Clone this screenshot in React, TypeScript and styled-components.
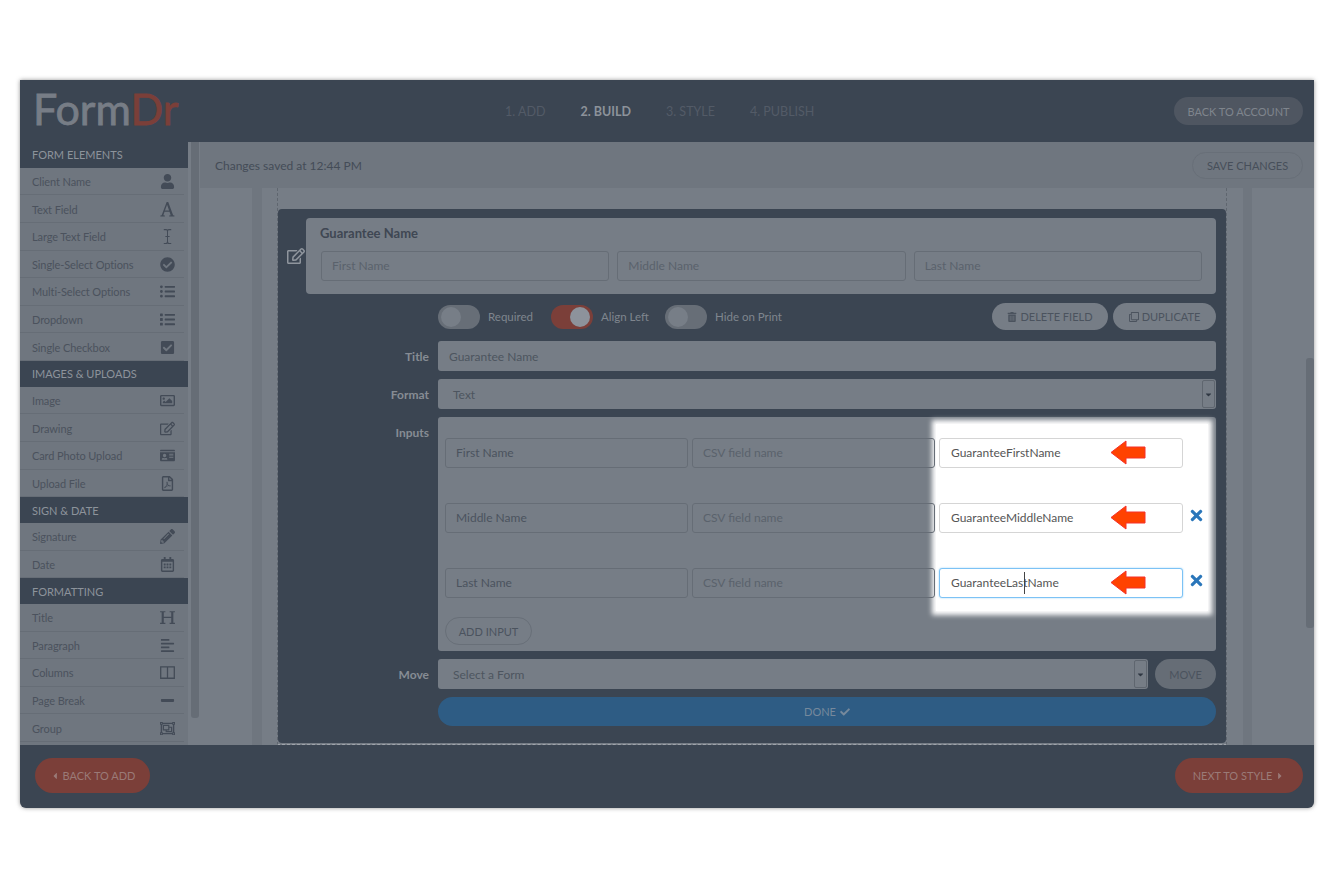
import React from "react";
import styled, { createGlobalStyle } from "styled-components";
import {
  FaUser, FaCheckCircle, FaListUl, FaList, FaCheckSquare, FaRegImage, FaRegEdit, FaIdCard,
  FaRegFilePdf, FaPencilAlt, FaRegCalendarAlt, FaAlignLeft, FaMinus, FaRegObjectGroup,
  FaTrashAlt, FaRegClone, FaCheck, FaTimes, FaCaretDown, FaCaretLeft, FaCaretRight,
} from "react-icons/fa";

const DARK = "#3b4552";
const PANEL = "#767d86";
const PANEL_ALT = "#6f767f";
const FONT = `"Lato", "Noto Sans", sans-serif`;

const Global = createGlobalStyle`
  html, body { margin: 0; padding: 0; background: #fff; }
  body { font-family: ${FONT}; font-size: 12px; }
  * { box-sizing: border-box; }
`;

const Page = styled.div`
  width: 1323px;
  height: 887px;
  padding: 80px 9px 0 20px;
  overflow: hidden;
`;
const Window = styled.div`
  width: 1294px;
  height: 728px;
  display: flex;
  flex-direction: column;
  border-radius: 0 0 6px 6px;
  background: ${DARK};
  box-shadow: 0 0 4px rgba(60, 60, 60, 0.55);
  overflow: hidden;
`;
const Header = styled.header`
  height: 62px;
  flex: none;
  display: flex;
  align-items: center;
  padding: 0 11px 0 13px;
`;
const Logo = styled.div`
  width: 148px;
  padding-bottom: 5px;
  font-family: "Lato", sans-serif;
  font-size: 43px;
  line-height: 56px;
  color: #777d86;
  -webkit-text-stroke: 0.8px currentColor;
  white-space: nowrap;
  span { color: #7b3f39; }
`;
const Steps = styled.nav`
  display: flex;
  gap: 35px;
  margin-left: 324px;
`;
const Step = styled.span<{ $active?: boolean }>`
  font-size: 12.5px;
  font-weight: ${(p) => (p.$active ? 700 : 400)};
  color: ${(p) => (p.$active ? "#8c929a" : "#535b67")};
  white-space: nowrap;
`;
const Pill = styled.div<{ $bg: string; $fg: string; $w: number; $h: number; $line?: string }>`
  width: ${(p) => p.$w}px;
  height: ${(p) => p.$h}px;
  flex: none;
  display: flex;
  align-items: center;
  justify-content: center;
  gap: 3px;
  border-radius: ${(p) => p.$h / 2}px;
  background: ${(p) => p.$bg};
  color: ${(p) => p.$fg};
  border: 1px solid ${(p) => p.$line ?? "transparent"};
  font-size: 11px;
  white-space: nowrap;
  svg { font-size: 10px; }
`;
const HeaderPill = styled(Pill)`
  margin-left: auto;
`;
const Body = styled.div`
  flex: 1;
  min-height: 0;
  display: flex;
`;
const Sidebar = styled.aside`
  width: 168px;
  flex: none;
  background: ${PANEL_ALT};
  overflow: hidden;
`;
const SectionHead = styled.div`
  height: 25.8px;
  display: flex;
  align-items: center;
  padding: 0 0 0 12px;
  background: ${DARK};
  color: #8d939b;
  font-size: 11px;
  white-space: nowrap;
`;
const Item = styled.div`
  height: 27.6px;
  margin-right: 4px;
  display: flex;
  align-items: center;
  justify-content: space-between;
  padding: 1px 8px 0 12px;
  color: #4b525d;
  font-size: 11px;
  letter-spacing: -0.1px;
  border-bottom: 1px solid #666d76;
  white-space: nowrap;
`;
const ItemIcon = styled.span`
  width: 18px;
  height: 18px;
  display: flex;
  align-items: center;
  justify-content: center;
  color: #434b57;
  font-size: 15px;
`;
const SideTrack = styled.div`
  width: 12px;
  flex: none;
  padding: 0 1px 27px 3px;
  background: ${PANEL};
`;
const SideThumb = styled.div`
  height: 576px;
  border-radius: 0 0 3px 3px;
  background: #666d76;
`;
const Main = styled.main`
  flex: 1;
  min-width: 0;
  display: flex;
  flex-direction: column;
  background: ${PANEL};
`;
const SaveBar = styled.div`
  height: 46px;
  flex: none;
  display: flex;
  align-items: center;
  justify-content: space-between;
  padding: 0 11px 0 15px;
  background: ${PANEL_ALT};
  color: #444c57;
  font-size: 12px;
`;
const Canvas = styled.div`
  flex: 1;
  min-height: 0;
  display: flex;
`;
const Stage = styled.div`
  flex: 1;
  padding: 0 51px 0 52px;
  overflow: hidden;
`;
const Sheet = styled.div`
  height: 100%;
  padding: 0 9px 0 10px;
  background: ${PANEL_ALT};
`;
const SheetInner = styled.div`
  height: 100%;
  padding: 0 16px 0 15px;
  background: ${PANEL};
`;
const DashedBox = styled.div`
  height: 100%;
  padding-top: 21px;
  border-left: 1px dashed #5f666f;
  border-right: 1px dashed #5f666f;
  border-bottom: 1px dashed #9ea3aa;
`;
const Card = styled.section`
  height: 534px;
  padding: 9px 10px 0 0;
  background: ${DARK};
  border-radius: 4px;
  display: flex;
  flex-direction: column;
`;
const PreviewRow = styled.div`
  display: flex;
  align-items: center;
  height: 76px;
  flex: none;
`;
const EditIcon = styled.span`
  width: 28px;
  flex: none;
  display: flex;
  justify-content: flex-end;
  padding-right: 1px;
  color: #8f959d;
  font-size: 18px;
`;
const PreviewBox = styled.div`
  flex: 1;
  height: 76px;
  padding: 8px 14px 0 15px;
  border-radius: 4px;
  background: ${PANEL};
`;
const PreviewTitle = styled.div`
  margin: 0 0 10px -1px;
  color: #3f4753;
  font-weight: 700;
  font-size: 13px;
  line-height: 15px;
`;
const PreviewFields = styled.div`
  display: grid;
  grid-template-columns: 1fr 1fr 1fr;
  gap: 8px;
`;
const Field = styled.div<{ $dim?: boolean }>`
  height: 30px;
  display: flex;
  align-items: center;
  padding: 0 0 2px 10px;
  border: 1px solid #666d76;
  border-radius: 3px;
  color: ${(p) => (p.$dim ? "#5a626c" : "#4b535e")};
  font-size: 12px;
  white-space: nowrap;
`;
const Controls = styled.div`
  margin: 9px 0 0 160px;
  height: 27px;
  display: flex;
  align-items: center;
`;
const Switch = styled.span<{ $on?: boolean }>`
  width: 42px;
  height: 24px;
  flex: none;
  display: flex;
  justify-content: ${(p) => (p.$on ? "flex-end" : "flex-start")};
  padding: 2px 3px;
  border-radius: 12px;
  background: ${(p) => (p.$on ? "#7b3f39" : "#676e77")};
`;
const Knob = styled.span<{ $on?: boolean }>`
  width: 20px;
  height: 20px;
  border-radius: 50%;
  background: ${(p) => (p.$on ? "#8d939b" : "#777e87")};
`;
const SwitchLabel = styled.span<{ $w: number }>`
  width: ${(p) => p.$w}px;
  padding-left: 8px;
  flex: none;
  color: #7f858e;
  font-size: 11.5px;
  white-space: nowrap;
`;
const ControlButtons = styled.div`
  margin-left: auto;
  display: flex;
  gap: 5px;
`;
const FormRow = styled.div<{ $top: number }>`
  margin-top: ${(p) => p.$top}px;
  display: flex;
  flex: none;
`;
const Label = styled.div`
  width: 151px;
  height: 30px;
  margin-right: 9px;
  padding-top: 1px;
  flex: none;
  text-align: right;
  color: #868c94;
  font-weight: 700;
  font-size: 12px;
  line-height: 30px;
`;
const Solid = styled.div<{ $pad?: number }>`
  flex: 1;
  height: 30px;
  display: flex;
  align-items: center;
  justify-content: space-between;
  padding-left: ${(p) => p.$pad ?? 11}px;
  border-radius: 3px;
  background: ${PANEL};
  color: #4d555f;
  font-size: 12px;
`;
const SelectCaret = styled.span`
  width: 13px;
  height: 28px;
  margin-right: 1px;
  display: flex;
  align-items: center;
  justify-content: center;
  border: 1px solid #5f666f;
  border-radius: 2px;
  color: #2f3742;
  font-size: 9px;
`;
const InputsPanel = styled.div`
  position: relative;
  flex: 1;
  height: 234px;
  padding: 21px 0 0 7px;
  border-radius: 3px;
  background: ${PANEL};
`;
const Spotlight = styled.div`
  position: absolute;
  left: 498px;
  top: 7px;
  width: 272px;
  height: 187px;
  background: #fff;
  box-shadow: 0 0 5px 4px #fff;
`;
const InputRows = styled.div`
  position: relative;
  display: flex;
  flex-direction: column;
  gap: 35px;
`;
const InputRow = styled.div`
  display: grid;
  grid-template-columns: 243px 243px 244px 24px;
  column-gap: 4px;
  align-items: center;
`;
const HotWrap = styled.div`
  position: relative;
`;
const HotField = styled.div<{ $focus?: boolean }>`
  height: 30px;
  display: flex;
  align-items: center;
  padding: 0 0 2px 11px;
  background: #fff;
  border: 1px solid ${(p) => (p.$focus ? "#7cc2f5" : "#d5d5d5")};
  border-radius: 3px;
  box-shadow: ${(p) => (p.$focus ? "0 0 2px #9ad2f8" : "none")};
  color: #555;
  font-size: 12px;
  white-space: nowrap;
`;
const Arrow = styled.svg`
  position: absolute;
  left: 171px;
  top: 2px;
  width: 36px;
  height: 25px;
`;
const Caret = styled.span`
  position: absolute;
  left: 85px;
  top: 4px;
  width: 1px;
  height: 22px;
  background: #444;
`;
const Remove = styled.span`
  display: flex;
  justify-content: center;
  padding-right: 6px;
  margin-top: -6px;
  color: #2a76ba;
  font-size: 17px;
`;
const AddWrap = styled.div`
  margin-top: 19px;
`;
const MoveControl = styled.div`
  flex: 1;
  display: flex;
  gap: 7px;
`;
const DoneBar = styled.div`
  margin: 8px 0 0 160px;
  height: 29px;
  flex: none;
  display: flex;
  align-items: center;
  justify-content: center;
  gap: 4px;
  border-radius: 15px;
  background: #2e5c84;
  color: #76899c;
  font-size: 11px;
  svg { font-size: 10px; }
`;
const PageTrack = styled.div`
  width: 11px;
  flex: none;
  padding: 170px 0 0 3px;
`;
const PageThumb = styled.div`
  height: 270px;
  border-radius: 3px;
  background: #666d76;
`;
const Footer = styled.footer`
  height: 63px;
  flex: none;
  display: flex;
  align-items: center;
  justify-content: space-between;
  padding: 0 11px 2px 15px;
`;

const TextGlyph = styled.svg`
  width: 17px;
  height: 17px;
  fill: currentColor;
`;

const IconA = () => (
  <TextGlyph viewBox="0 0 16 16"><path d="M7.2 1h1.5l4.6 12.3 1.2.4v.8H9.6v-.8l1.4-.4-1.1-3.2H5.2l-1.1 3.2 1.4.4v.8H1.3v-.8l1.2-.4L7.2 1zM7.6 3.600L5.600 9h3.900L7.600 3.600z" /></TextGlyph>
);
const IconCursor = () => (
  <TextGlyph viewBox="0 0 16 16"><path d="M4.500 1h2.200c.6 0 1 .2 1.300.5.3-.3.7-.5 1.300-.5h2.200v1H9.600c-.8 0-1.100.3-1.100 1v4.500H10v1H8.500V13c0 .7.3 1 1.100 1h1.900v1H9.300c-.6 0-1-.2-1.300-.5-.3.3-.7.5-1.300.5H4.500v-1h1.900c.8 0 1.100-.3 1.100-1V8.500H6v-1h1.500V3c0-.7-.3-1-1.100-1H4.500z" /></TextGlyph>
);
const IconH = () => (
  <TextGlyph viewBox="0 0 16 16"><path d="M1 2h5v1H4.500v4.300h7V3H10V2h5v1h-1.500v10H15v1h-5v-1h1.500V8.500h-7V13H6v1H1v-1h1.500V3H1z" /></TextGlyph>
);
const IconColumns = () => (
  <TextGlyph viewBox="0 0 16 16"><path fillRule="evenodd" d="M1 2h14v12H1zM2.200 3.200v9.600h5.200V3.200zM8.600 3.200v9.600h5.200V3.200z" /></TextGlyph>
);

type Entry = { name: string; icon: React.ReactNode };
const groups: { title: string; items: Entry[] }[] = [
  { title: "FORM ELEMENTS", items: [
    { name: "Client Name", icon: <FaUser /> },
    { name: "Text Field", icon: <IconA /> },
    { name: "Large Text Field", icon: <IconCursor /> },
    { name: "Single-Select Options", icon: <FaCheckCircle /> },
    { name: "Multi-Select Options", icon: <FaListUl /> },
    { name: "Dropdown", icon: <FaList /> },
    { name: "Single Checkbox", icon: <FaCheckSquare /> },
  ] },
  { title: "IMAGES & UPLOADS", items: [
    { name: "Image", icon: <FaRegImage /> },
    { name: "Drawing", icon: <FaRegEdit /> },
    { name: "Card Photo Upload", icon: <FaIdCard /> },
    { name: "Upload File", icon: <FaRegFilePdf /> },
  ] },
  { title: "SIGN & DATE", items: [
    { name: "Signature", icon: <FaPencilAlt /> },
    { name: "Date", icon: <FaRegCalendarAlt /> },
  ] },
  { title: "FORMATTING", items: [
    { name: "Title", icon: <IconH /> },
    { name: "Paragraph", icon: <FaAlignLeft /> },
    { name: "Columns", icon: <IconColumns /> },
    { name: "Page Break", icon: <FaMinus /> },
    { name: "Group", icon: <FaRegObjectGroup /> },
  ] },
];

const rows = [
  { name: "First Name", csv: "GuaranteeFirstName", remove: false, focus: false },
  { name: "Middle Name", csv: "GuaranteeMiddleName", remove: true, focus: false },
  { name: "Last Name", csv: "GuaranteeLastName", remove: true, focus: true },
];

const RedArrow = () => (
  <Arrow viewBox="0 0 36 25">
    <path d="M1 12.500 16 1v6h19v11H16v6z" fill="#ff4200" stroke="#f5302a" strokeWidth="1" />
  </Arrow>
);

export default function App() {
  return (
    <Page>
      <Global />
      <Window>
        <Header>
          <Logo>Form<span>Dr</span></Logo>
          <Steps>
            <Step>1. ADD</Step>
            <Step $active>2. BUILD</Step>
            <Step>3. STYLE</Step>
            <Step>4. PUBLISH</Step>
          </Steps>
          <HeaderPill $bg="#4f5661" $fg="#7f858d" $w={129} $h={28}>BACK TO ACCOUNT</HeaderPill>
        </Header>
        <Body>
          <Sidebar>
            {groups.map((g) => (
              <React.Fragment key={g.title}>
                <SectionHead>{g.title}</SectionHead>
                {g.items.map((i) => (
                  <Item key={i.name}>
                    {i.name}
                    <ItemIcon>{i.icon}</ItemIcon>
                  </Item>
                ))}
              </React.Fragment>
            ))}
          </Sidebar>
          <SideTrack><SideThumb /></SideTrack>
          <Main>
            <SaveBar>
              Changes saved at 12:44 PM
              <Pill $bg={PANEL_ALT} $fg="#474f5a" $w={111} $h={27} $line="#686f78">SAVE CHANGES</Pill>
            </SaveBar>
            <Canvas>
              <Stage>
                <Sheet>
                  <SheetInner>
                    <DashedBox>
                      <Card>
                        <PreviewRow>
                          <EditIcon><FaRegEdit /></EditIcon>
                          <PreviewBox>
                            <PreviewTitle>Guarantee Name</PreviewTitle>
                            <PreviewFields>
                              <Field $dim>First Name</Field>
                              <Field $dim>Middle Name</Field>
                              <Field $dim>Last Name</Field>
                            </PreviewFields>
                          </PreviewBox>
                        </PreviewRow>
                        <Controls>
                          <Switch><Knob /></Switch>
                          <SwitchLabel $w={71}>Required</SwitchLabel>
                          <Switch $on><Knob $on /></Switch>
                          <SwitchLabel $w={72}>Align Left</SwitchLabel>
                          <Switch><Knob /></Switch>
                          <SwitchLabel $w={100}>Hide on Print</SwitchLabel>
                          <ControlButtons>
                            <Pill $bg={PANEL} $fg="#4b535e" $w={116} $h={27}><FaTrashAlt />DELETE FIELD</Pill>
                            <Pill $bg={PANEL} $fg="#4b535e" $w={103} $h={27}><FaRegClone />DUPLICATE</Pill>
                          </ControlButtons>
                        </Controls>
                        <FormRow $top={11}>
                          <Label>Title</Label>
                          <Solid>Guarantee Name</Solid>
                        </FormRow>
                        <FormRow $top={8}>
                          <Label>Format</Label>
                          <Solid $pad={15}>Text<SelectCaret><FaCaretDown /></SelectCaret></Solid>
                        </FormRow>
                        <FormRow $top={8}>
                          <Label>Inputs</Label>
                          <InputsPanel>
                            <Spotlight />
                            <InputRows>
                              {rows.map((r) => (
                                <InputRow key={r.name}>
                                  <Field>{r.name}</Field>
                                  <Field $dim>CSV field name</Field>
                                  <HotWrap>
                                    <HotField $focus={r.focus}>{r.csv}</HotField>
                                    {r.focus && <Caret />}
                                    <RedArrow />
                                  </HotWrap>
                                  {r.remove && <Remove><FaTimes /></Remove>}
                                </InputRow>
                              ))}
                            </InputRows>
                            <AddWrap>
                              <Pill $bg={PANEL} $fg="#4b535e" $w={87} $h={28} $line="#686f78">ADD INPUT</Pill>
                            </AddWrap>
                          </InputsPanel>
                        </FormRow>
                        <FormRow $top={8}>
                          <Label>Move</Label>
                          <MoveControl>
                            <Solid $pad={15}>Select a Form<SelectCaret><FaCaretDown /></SelectCaret></Solid>
                            <Pill $bg="#666d76" $fg="#4b535e" $w={61} $h={30}>MOVE</Pill>
                          </MoveControl>
                        </FormRow>
                        <DoneBar>DONE <FaCheck /></DoneBar>
                      </Card>
                    </DashedBox>
                  </SheetInner>
                </Sheet>
              </Stage>
              <PageTrack><PageThumb /></PageTrack>
            </Canvas>
          </Main>
        </Body>
        <Footer>
          <Pill $bg="#7b3f39" $fg="#9a7a77" $w={115} $h={35}><FaCaretLeft />BACK TO ADD</Pill>
          <Pill $bg="#7b3f39" $fg="#9a7a77" $w={128} $h={35}>NEXT TO STYLE<FaCaretRight /></Pill>
        </Footer>
      </Window>
    </Page>
  );
}
